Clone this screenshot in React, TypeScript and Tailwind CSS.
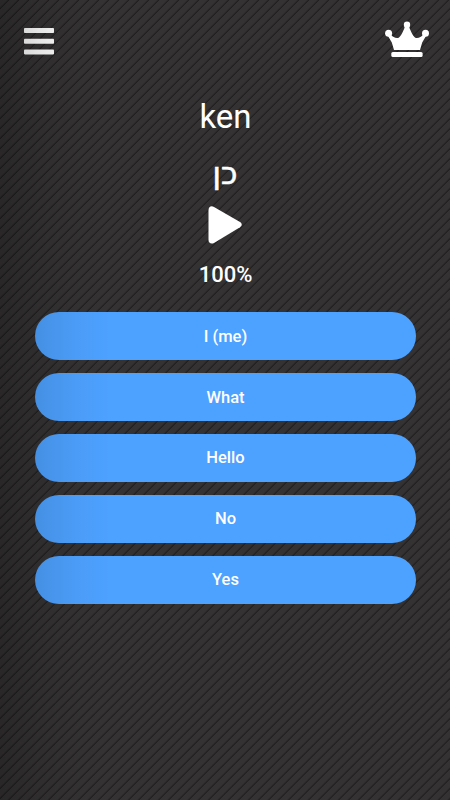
const answers = ["I (me)", "What", "Hello", "No", "Yes"];

const MenuIcon = () => (
  <svg width="30" height="27" viewBox="0 0 30 27" fill="#fff">
    <rect x="0" y="0" width="30" height="5" rx="0.8" />
    <rect x="0" y="10.7" width="30" height="5" rx="0.8" />
    <rect x="0" y="21.4" width="30" height="5" rx="0.8" />
  </svg>
);

const CrownIcon = () => (
  <svg width="44" height="36" viewBox="0 0 44 36" fill="#fff">
    <circle cx="22" cy="3.8" r="3.2" />
    <circle cx="3.6" cy="12.3" r="3.5" />
    <circle cx="40.5" cy="12.3" r="3.5" />
    <path d="M20 5h4c.8 3.500 3.500 9.300 6.300 11.800 3 .6 5.900-.4 8-3.300l2.700 1.500-3.800 6.500-2.200 7.500H9l-2.200-7.500L3 15l2.700-1.500c2.100 2.900 5 3.900 8 3.300C16.500 14.300 19.200 8.500 20 5z" />
    <rect x="6.300" y="31" width="31.300" height="4.900" rx="1.500" />
  </svg>
);

const PlayIcon = () => (
  <svg width="34" height="38" viewBox="0 0 34 38" fill="#fff">
    <path d="M6 .9 32 15.900c2.300 1.400 2.300 4 0 5.400L6 36.900C3 38.400.5 36.900.5 33.900V4C.5 1 3-.7 6 .9z" />
  </svg>
);

export default function App() {
  return (
    <div className="relative w-[450px] h-[800px] overflow-hidden flex flex-col text-white font-['Roboto','DejaVu_Sans',sans-serif] bg-[#333132] bg-[repeating-linear-gradient(135deg,#343233_0px,#343233_4.4px,#302e2f_5.2px,#1f1d1e_6.3px,#343233_7.07px)]">
      <header className="flex justify-between items-start h-[98px] pl-[24px] pr-[21px] pt-[21px]">
        <button type="button" aria-label="Menu" className="mt-[7px]">
          <MenuIcon />
        </button>
        <button type="button" aria-label="Premium">
          <CrownIcon />
        </button>
      </header>

      <div className="flex flex-col items-center">
        <div className="text-[33px] leading-[38px] pl-px">ken</div>
        <div
          dir="rtl"
          lang="he"
          className="mt-[13px] h-[57px] text-[31px] leading-[48px] font-['DejaVu_Sans',sans-serif] [-webkit-text-stroke:0.6px_#fff]"
        >
          כן
        </div>
        <button type="button" aria-label="Play">
          <PlayIcon />
        </button>
        <div className="mt-[18px] text-[22px] leading-[26px] font-medium pl-px">
          100%
        </div>
      </div>

      <div className="flex flex-col gap-[12.9px] mt-[24px] pl-[35px] pr-[34px]">
        {answers.map((answer) => (
          <button
            key={answer}
            type="button"
            className="h-[48px] shrink-0 rounded-full bg-[#4da1ff] pt-[2px] text-[16.5px] font-medium"
          >
            {answer}
          </button>
        ))}
      </div>

      {/* drawer shadow falling over the left side */}
      <div className="absolute inset-y-0 left-0 w-[110px] pointer-events-none bg-[linear-gradient(90deg,rgba(0,0,0,0.22),rgba(0,0,0,0.1)_35%,rgba(0,0,0,0.03)_70%,transparent)]" />
    </div>
  );
}
